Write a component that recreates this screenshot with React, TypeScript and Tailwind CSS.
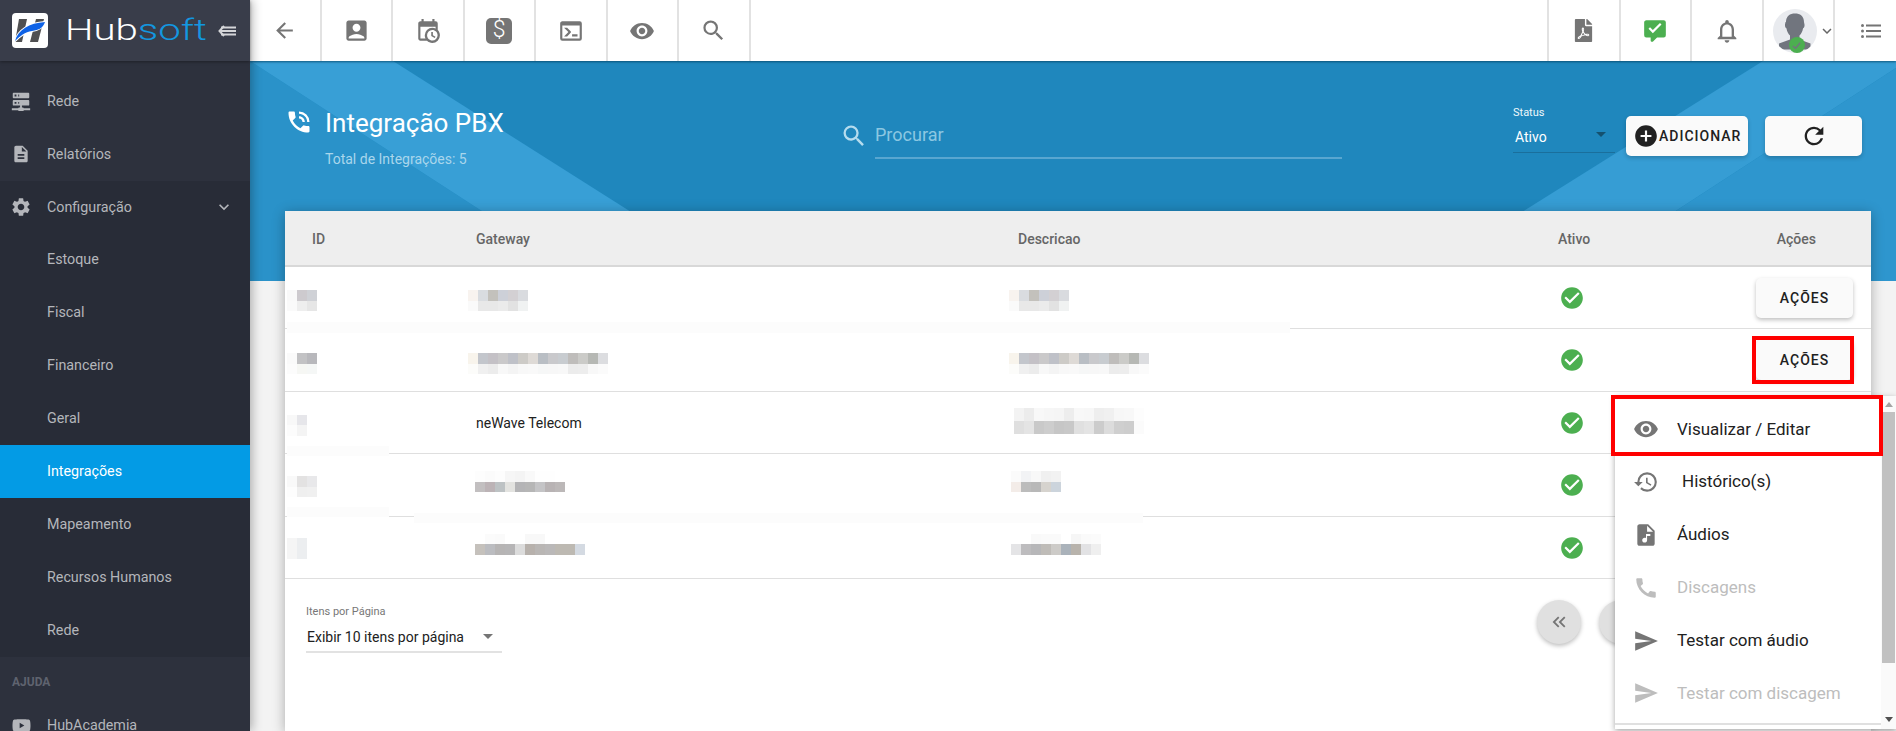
import type { ReactNode } from 'react';
import {
  MdAccountBox,
  MdAddCircle,
  MdArrowBack,
  MdAudioFile,
  MdCall,
  MdCheckCircle,
  MdDescription,
  MdHistory,
  MdKeyboardArrowDown,
  MdKeyboardDoubleArrowLeft,
  MdKeyboardArrowLeft,
  MdNotificationsNone,
  MdPhoneInTalk,
  MdRefresh,
  MdSearch,
  MdSend,
  MdSettings,
  MdVisibility,
} from 'react-icons/md';
import { FaFilePdf, FaYoutube } from 'react-icons/fa';

function MdiIcon({ d, size, className }: { d: string; size: number; className?: string }) {
  return (
    <svg viewBox="0 0 24 24" width={size} height={size} fill="currentColor" className={className}>
      <path d={d} />
    </svg>
  );
}

const SERVER_NETWORK =
  'M13,19H14A1,1 0 0,1 15,20H22V22H15A1,1 0 0,1 14,23H10A1,1 0 0,1 9,22H2V20H9A1,1 0 0,1 10,19H11V17H4A1,1 0 0,1 3,16V12A1,1 0 0,1 4,11H20A1,1 0 0,1 21,12V16A1,1 0 0,1 20,17H13V19M4,3H20A1,1 0 0,1 21,4V8A1,1 0 0,1 20,9H4A1,1 0 0,1 3,8V4A1,1 0 0,1 4,3M9,7H10V5H9V7M9,15H10V13H9V15M5,5V7H7V5H5M5,13V15H7V13H5Z';
const CALENDAR_CLOCK =
  'M15,13H16.5V15.82L18.94,17.23L18.19,18.53L15,16.69V13M19,8H5V19H9.67C9.24,18.09 9,17.07 9,16A7,7 0 0,1 16,9C17.07,9 18.09,9.24 19,9.67V8M5,21C3.89,21 3,20.1 3,19V5C3,3.89 3.89,3 5,3H6V1H8V3H16V1H18V3H19A2,2 0 0,1 21,5V11.1C22.24,12.36 23,14.09 23,16A7,7 0 0,1 16,23C14.09,23 12.36,22.24 11.1,21H5M16,11.15A4.85,4.85 0 0,0 11.15,16C11.15,18.68 13.32,20.85 16,20.85A4.85,4.85 0 0,0 20.85,16C20.85,13.32 18.68,11.15 16,11.15Z';
const CONSOLE =
  'M20,19V7H4V19H20M20,3A2,2 0 0,1 22,5V19A2,2 0 0,1 20,21H4A2,2 0 0,1 2,19V5C2,3.89 2.9,3 4,3H20M13,17V15H18V17H13M9.58,13L5.57,9H8.4L11.7,12.3C12.09,12.69 12.09,13.33 11.7,13.72L8.42,17H5.59L9.58,13Z';
const COMMENT_CHECK =
  'M9 22A1 1 0 0 1 8 21V18H4A2 2 0 0 1 2 16V4C2 2.89 2.9 2 4 2H20A2 2 0 0 1 22 4V16A2 2 0 0 1 20 18H13.9L10.2 21.71C10 21.9 9.75 22 9.5 22H9M10 14L18 6L16.59 4.58L10 11.17L7.41 8.59L6 10L10 14Z';

function NavItem({
  label,
  icon,
  active,
  trailing,
}: {
  label: string;
  icon?: ReactNode;
  active?: boolean;
  trailing?: ReactNode;
}) {
  return (
    <div
      className={`relative flex h-[52.9px] items-center pl-[47px] text-[14.3px] ${
        active ? 'bg-[#039be5] text-white' : 'text-[#b4b6bb]'
      }`}
    >
      {icon && <span className="absolute left-[10px] flex w-[22px] justify-center">{icon}</span>}
      {label}
      {trailing}
    </div>
  );
}

function Sidebar() {
  return (
    <aside className="z-20 flex h-full w-[250px] shrink-0 flex-col bg-[#2d313d] shadow-[2px_0_10px_rgba(0,0,0,0.3)]">
      <div className="flex h-[61px] shrink-0 items-center bg-[#393d4a] pl-[12px] shadow-[0_1px_3px_rgba(0,0,0,0.35)]">
        <svg viewBox="0 0 36 35" width={36} height={35} className="shrink-0">
          <rect width="36" height="35" rx="4" fill="#fff" />
          <path d="M7 6h8l-5 23H3z" fill="#505052" />
          <path d="M24 6h8l-6 23h-8z" fill="#505052" />
          <path d="M3 28C6 17 17 10 33 9 31 15 27 17 20 18 13 19 8 23 3 28z" fill="#fff" stroke="#fff" strokeWidth="2" />
          <path d="M3 28C6 17 17 10 33 9 31 15 27 17 20 18 13 19 8 23 3 28z" fill="#0f62e6" />
        </svg>
        <span className="ml-[17px] inline-block w-[143px] shrink-0">
          <span className="inline-block origin-left scale-x-[1.34] text-[30px] leading-none font-light text-white">
            Hub<span className="text-[#1397e0]">soft</span>
          </span>
        </span>
        <svg viewBox="0 0 18 12" width={18} height={12} className="ml-[10px] shrink-0" fill="none" stroke="#d5d6d9" strokeWidth="2">
          <path d="M6 1 1.5 6 6 11" />
          <path d="M3 2.5h15M3 6h15M3 9.5h15" />
        </svg>
      </div>
      <nav className="flex flex-col pt-[14px]">
        <NavItem label="Rede" icon={<MdiIcon d={SERVER_NETWORK} size={22} />} />
        <NavItem label="Relatórios" icon={<MdDescription size={20} />} />
        <div className="bg-[#282c37]">
          <NavItem
            label="Configuração"
            icon={<MdSettings size={22} />}
            trailing={<MdKeyboardArrowDown size={20} className="absolute left-[214px]" />}
          />
          <NavItem label="Estoque" />
          <NavItem label="Fiscal" />
          <NavItem label="Financeiro" />
          <NavItem label="Geral" />
          <NavItem label="Integrações" active />
          <NavItem label="Mapeamento" />
          <NavItem label="Recursos Humanos" />
          <NavItem label="Rede" />
        </div>
        <div className="pt-[17px] pb-[9px] pl-[12px] text-[12px] leading-[16px] font-bold text-[#5f636f]">AJUDA</div>
        <NavItem label="HubAcademia" icon={<FaYoutube size={19} />} />
      </nav>
    </aside>
  );
}

function ToolCell({ children, className = '' }: { children: ReactNode; className?: string }) {
  return (
    <div className={`flex h-full w-[71.5px] items-center justify-center border-r-2 border-[#e2e2e2] text-[#757575] ${className}`}>
      {children}
    </div>
  );
}

function Toolbar() {
  return (
    <header className="relative z-10 flex h-[61px] shrink-0 items-center bg-white shadow-[0_1px_2px_rgba(0,60,90,0.7)]">
      <ToolCell>
        <MdArrowBack size={25} />
      </ToolCell>
      <ToolCell>
        <MdAccountBox size={27} />
      </ToolCell>
      <ToolCell>
        <MdiIcon d={CALENDAR_CLOCK} size={26} />
      </ToolCell>
      <ToolCell>
        <span className="flex h-[26px] w-[26px] items-center justify-center rounded-[5px] bg-[#757575] text-[23px] font-light text-white">
          $
        </span>
      </ToolCell>
      <ToolCell>
        <MdiIcon d={CONSOLE} size={26} />
      </ToolCell>
      <ToolCell>
        <MdVisibility size={26} />
      </ToolCell>
      <ToolCell>
        <MdSearch size={27} />
      </ToolCell>
      <div className="ml-auto flex h-full">
        <div className="border-l-2 border-[#e2e2e2]" />
        <ToolCell>
          <FaFilePdf size={23} />
        </ToolCell>
        <ToolCell>
          <MdiIcon d={COMMENT_CHECK} size={26} className="text-[#4caf50]" />
        </ToolCell>
        <ToolCell>
          <MdNotificationsNone size={28} />
        </ToolCell>
        <ToolCell className="relative justify-start pl-[9px]">
          <svg viewBox="0 0 44 44" width={44} height={44} className="shrink-0">
            <defs>
              <clipPath id="avatar-clip">
                <circle cx="22" cy="22" r="22" />
              </clipPath>
            </defs>
            <g clipPath="url(#avatar-clip)">
              <rect width="44" height="44" fill="#e9ebef" />
              <path d="M13 13c0-6 4-8.500 9-8.500s9 2.500 9 8.500c0 1 .8 2 .5 4-.3 1.600-1 2-1.500 2.500-.5 3-1.800 5.500-3.500 7v4l11 4v6H6v-6l11-4v-4c-1.700-1.500-3-4-3.500-7-.5-.5-1.200-.9-1.500-2.500-.3-2 .5-3 .5-4z" fill="#71757e" />
            </g>
          </svg>
          <span className="absolute top-[37px] left-[25px] flex h-[16px] w-[16px] items-center justify-center rounded-full bg-[#4caf50]">
            <svg viewBox="0 0 12 12" width={11} height={11} fill="none" stroke="#71757e" strokeWidth="1.500">
              <path d="M2 6.500 5 9l5-6" />
            </svg>
          </span>
          <MdKeyboardArrowDown size={18} className="ml-[1px] shrink-0 text-[#666]" />
        </ToolCell>
        <div className="flex w-[61px] items-center justify-center pl-[10px] text-[#757575]">
          <svg viewBox="0 0 20 14" width={20} height={14} fill="currentColor">
            <circle cx="1.500" cy="1.500" r="1.500" />
            <circle cx="1.500" cy="7" r="1.500" />
            <circle cx="1.500" cy="12.500" r="1.500" />
            <rect x="5" y="0.500" width="15" height="2" />
            <rect x="5" y="6" width="15" height="2" />
            <rect x="5" y="11.500" width="15" height="2" />
          </svg>
        </div>
      </div>
    </header>
  );
}

function Hero() {
  return (
    <section className="relative h-[220px] shrink-0 bg-[#1f87bd]">
      <svg viewBox="0 0 1646 220" width={1646} height={220} className="absolute inset-0">
        <polygon points="0,0 340,220 0,220" fill="#2a92c9" />
        <polygon points="0,0 143,0 490,220 340,220" fill="#389fd6" />
        <polygon points="1513,0 1646,0 1646,7 1318,220 1162,220" fill="#369dd4" />
        <polygon points="1646,7 1646,220 1318,220" fill="#2e96ce" />
      </svg>
      <div className="relative flex text-white">
        <div className="flex w-[592px] shrink-0 pl-[35px]">
          <MdPhoneInTalk size={28} className="mt-[47px] shrink-0" />
          <div className="ml-[12px] pt-[45px]">
            <h1 className="text-[26px] leading-[34px] font-normal">Integração PBX</h1>
            <p className="mt-[10px] text-[14px] leading-[18px] text-[#a9d6ec]">Total de Integrações: 5</p>
          </div>
        </div>
        <MdSearch size={28} className="mt-[61px] -ml-[2px] shrink-0 text-[#b5dcee]" />
        <div className="mt-[62px] ml-[7px] h-[36px] w-[467px] shrink-0 border-b-2 border-[#58a6d0] text-[18px] leading-[24px] text-[#8cc7e2]">
          Procurar
        </div>
        <div className="mt-[45px] ml-[171px] w-[102px] shrink-0">
          <div className="text-[11px] leading-[13px] text-[#eef7fb]">Status</div>
          <div className="mt-[5px] flex h-[29px] items-start justify-between border-b border-[#1a6f9c] pt-[3px] pl-[2px] text-[14px] leading-[20px]">
            Ativo
            <span className="mt-[5px] mr-[9px] h-0 w-0 border-x-[5px] border-t-[5px] border-x-transparent border-t-[#14516f]" />
          </div>
        </div>
        <button className="mt-[55px] ml-[11px] flex h-[40px] w-[122px] shrink-0 items-center rounded-[5px] bg-[#fafafa] pl-[7px] text-[14px] font-medium tracking-[1px] text-[#212121] shadow-[0_2px_4px_rgba(0,0,0,0.2)]">
          <MdAddCircle size={26} className="shrink-0" />
          ADICIONAR
        </button>
        <button className="mt-[55px] ml-[17px] flex h-[40px] w-[97px] shrink-0 items-center justify-center rounded-[5px] bg-[#fafafa] text-[#212121] shadow-[0_2px_4px_rgba(0,0,0,0.2)]">
          <MdRefresh size={28} />
        </button>
      </div>
    </section>
  );
}

function Mosaic({ rows, className = '' }: { rows: string[][]; className?: string }) {
  return (
    <div className={`flex flex-col ${className}`}>
      {rows.map((row, r) => (
        <div key={r} className="flex h-[10.5px]">
          {row.map((c, i) => (
            <span key={i} className="h-full w-[10px]" style={{ backgroundColor: c }} />
          ))}
        </div>
      ))}
    </div>
  );
}

const BLUR = {
  id1: [['#f9f9f9', '#cdcace', '#cfd1d6'], ['#fafafa', '#eeeeee', '#e6e6e6']],
  id2: [['#fafafa', '#c2c2c4', '#b8b8bc'], ['#fcfcfc', '#f6f7f4', '#f5f7f6']],
  id3: [['#f8f8f8', '#e6e6ea'], ['#fcfcfc', '#f4f4f4']],
  id4: [['#f9f9f9', '#e3e2e2', '#e8e8ea'], ['#fdfdfd', '#efefef', '#f0f0f0']],
  id5: [['#f5f5f5', '#eceef0'], ['#f5f5f5', '#eceef0']],
  short: [
    ['#f8f3ef', '#d9dce0', '#c3c1bc', '#cdd0d8', '#d3d0d3', '#d9dbdf'],
    ['#fafafa', '#e8e8e8', '#e8e8e8', '#ebebeb', '#e2e2e2', '#f0f2f2'],
  ],
  long: [
    ['#f8f4ec', '#c3c6cc', '#c4c1c6', '#cac9ca', '#bfc1c8', '#cdcbc7', '#dedad6', '#b9bec4', '#c9c9cc', '#c8ccd0', '#bfbdbb', '#cbcbc8', '#b6b8b4', '#dcdde0'],
    ['#fcfcfa', '#f0f0f0', '#ececec', '#f8f8f8', '#f4f4f4', '#f8f8f8', '#f9f9f9', '#f6f7f7', '#f7f7f7', '#f8f8f8', '#ececec', '#ededed', '#f8f8f8', '#fbfbfb'],
  ],
  desc3: [
    ['#f3f3f3', '#ececec', '#f8f8f8', '#f6f6f6', '#f5f5f5', '#ededed', '#f8f8f8', '#f7f7f7', '#eeeeee', '#f0f0f0', '#f7f7f7', '#f8f8f8', '#fdfdfd'],
    ['#dfdfdf', '#e4e4e4', '#c9c9c9', '#cdcdcd', '#c6c6c6', '#c8c8c8', '#e0e0e0', '#e4e4e4', '#cccccc', '#dcdcdc', '#cfcfcf', '#cdcdcd', '#fbfbfb'],
  ],
  gate4: [
    ['#fdfdfd', '#fbfbfb', '#fdfdfd', '#f6f6f6', '#f4f4f4', '#f9f9f9', '#fefefe', '#fefefe', '#ffffff'],
    ['#c2bfc0', '#bcb3b6', '#bdc2c4', '#e3e3e0', '#b4b4b6', '#b6b6b6', '#c4c4c6', '#b8b3b4', '#bcb8b8'],
  ],
  desc4: [
    ['#fbfbfb', '#f2f3f5', '#f8f8f8', '#f0f0f0', '#f2f2f2'],
    ['#f3ece8', '#bcbcbc', '#b8b8b8', '#d6d3ce', '#ccd4dc'],
  ],
  gate5: [
    ['#ffffff', '#fbfbfb', '#fafafa', '#ffffff', '#ffffff', '#f8f8f8', '#f8f8f8', '#ffffff', '#ffffff', '#ffffff', '#ffffff'],
    ['#c5c1bc', '#bbbcc0', '#b6b4b4', '#b6b5b6', '#dcdcdc', '#b7b1ac', '#b9b6b4', '#bab8b8', '#bdb9b2', '#bdb9b2', '#d4dae2'],
  ],
  desc5: [
    ['#ffffff', '#ffffff', '#f9f9f9', '#fafafa', '#fafafa', '#ffffff', '#f6f6f6', '#fafafa', '#fbfbfb'],
    ['#e4e4e6', '#bdbcbe', '#b7b7b9', '#bfbcb8', '#cdcbc8', '#aab2ba', '#b8b3ac', '#e2e2e4', '#efefef'],
  ],
};

function Row({ children, strips }: { children: ReactNode; strips?: ReactNode }) {
  return (
    <div className="relative grid h-[62.4px] grid-cols-[191px_542px_540px_1fr] border-b border-[#dfdfdf]">
      {children}
      {strips}
    </div>
  );
}

function ActiveCell({ framed }: { framed?: boolean }) {
  return (
    <div className="flex items-start justify-between pr-[18px]">
      <MdCheckCircle size={26} className="mt-[18px] ml-[1px] text-[#4caf50]" />
      <div className="relative mt-[11px]">
        {framed && <div className="absolute -top-[4px] -right-[1px] -bottom-[4px] -left-[4px] border-[4px] border-[#f00]" />}
        <button className="h-[40px] w-[97px] rounded-[5px] bg-[#fafafa] text-[14px] font-medium tracking-[1px] text-[#212121] shadow-[0_2px_4px_rgba(0,0,0,0.25)]">
          AÇÕES
        </button>
      </div>
    </div>
  );
}

function Table() {
  return (
    <div className="relative -mt-[70px] mr-[25px] ml-[35px] flex-1 bg-white shadow-[0_2px_12px_rgba(0,0,0,0.3)]">
      <div className="grid h-[56px] grid-cols-[191px_542px_540px_1fr] items-center border-b-2 border-[#d8d8d8] bg-[#eeeeee] pt-[2px] text-[14px] font-medium text-[#666666]">
        <div className="pl-[27px]">ID</div>
        <div>Gateway</div>
        <div>Descricao</div>
        <div className="flex justify-between pr-[55px]">
          <span>Ativo</span>
          <span>Ações</span>
        </div>
      </div>
      <Row strips={<div className="absolute top-[55px] left-[2px] h-[11px] w-[1003px] bg-[#fcfcfc]" />}>
        <Mosaic rows={BLUR.id1} className="mt-[23px] ml-[2px]" />
        <Mosaic rows={BLUR.short} className="mt-[23px] -ml-[8px]" />
        <Mosaic rows={BLUR.short} className="mt-[23px] -ml-[9px]" />
        <ActiveCell />
      </Row>
      <Row>
        <Mosaic rows={BLUR.id2} className="mt-[24px] ml-[2px]" />
        <Mosaic rows={BLUR.long} className="mt-[24px] -ml-[8px]" />
        <Mosaic rows={BLUR.long} className="mt-[24px] -ml-[9px]" />
        <ActiveCell framed />
      </Row>
      <Row strips={<div className="absolute top-[54px] left-[2px] h-[10px] w-[102px] bg-[#fcfcfc]" />}>
        <Mosaic rows={BLUR.id3} className="mt-[23px] ml-[2px]" />
        <div className="pt-[21px] text-[14px] leading-[20px] text-[#212121]">neWave Telecom</div>
        <Mosaic rows={BLUR.desc3} className="mt-[16px] -ml-[4px] [&>div]:h-[13px]" />
        <ActiveCell />
      </Row>
      <Row
        strips={
          <>
            <div className="absolute top-[53px] left-[2px] h-[10px] w-[102px] bg-[#fcfcfc]" />
            <div className="absolute top-[59px] left-[129px] h-[10px] w-[729px] bg-[#fcfcfc]" />
          </>
        }
      >
        <Mosaic rows={BLUR.id4} className="mt-[22px] ml-[2px]" />
        <Mosaic rows={BLUR.gate4} className="mt-[17px] -ml-[1px]" />
        <Mosaic rows={BLUR.desc4} className="mt-[17px] -ml-[7px]" />
        <ActiveCell />
      </Row>
      <Row>
        <Mosaic rows={BLUR.id5} className="mt-[21px] ml-[2px]" />
        <Mosaic rows={BLUR.gate5} className="mt-[17px] -ml-[1px]" />
        <Mosaic rows={BLUR.desc5} className="mt-[17px] -ml-[7px]" />
        <ActiveCell />
      </Row>
      <div className="flex items-start pt-[26px] pl-[21px]">
        <div className="w-[196px]">
          <div className="text-[11px] leading-[14px] text-[#777777]">Itens por Página</div>
          <div className="mt-[4px] flex h-[30px] items-start justify-between border-b-2 border-[#e2e2e2] pt-[4px] pl-[1px] text-[14px] leading-[20px] text-[#212121]">
            Exibir 10 itens por página
            <span className="mt-[7px] mr-[9px] h-0 w-0 border-x-[5px] border-t-[5px] border-x-transparent border-t-[#757575]" />
          </div>
        </div>
        <div className="mt-[-5px] mr-[228px] ml-auto flex gap-[18px]">
          <span className="flex h-[44px] w-[44px] items-center justify-center rounded-full bg-[#e0e0e0] text-[#757575] shadow-[0_2px_4px_rgba(0,0,0,0.25)]">
            <MdKeyboardDoubleArrowLeft size={22} />
          </span>
          <span className="flex h-[44px] w-[44px] items-center justify-center rounded-full bg-[#e0e0e0] text-[#757575] shadow-[0_2px_4px_rgba(0,0,0,0.25)]">
            <MdKeyboardArrowLeft size={22} />
          </span>
        </div>
      </div>
    </div>
  );
}

function MenuItem({
  icon,
  label,
  disabled,
  className = '',
}: {
  icon: ReactNode;
  label: string;
  disabled?: boolean;
  className?: string;
}) {
  return (
    <div
      className={`flex h-[52.8px] items-center pl-[18px] text-[17px] ${
        disabled ? 'text-[#bdbdbd]' : 'text-[#212121]'
      }`}
    >
      <span className={`flex w-[26px] justify-center ${disabled ? 'text-[#bdbdbd]' : 'text-[#757575]'}`}>{icon}</span>
      <span className={className}>{label}</span>
    </div>
  );
}

function ActionsMenu() {
  return (
    <div className="absolute top-[396px] left-[1365px] z-10 flex h-[333px] w-[281px] bg-white shadow-[0_2px_6px_rgba(0,0,0,0.35)]">
      <div className="relative w-[266px] shrink-0 pt-[7px]">
        <MenuItem icon={<MdVisibility size={26} />} label="Visualizar / Editar" className="ml-[18px]" />
        <MenuItem icon={<MdHistory size={26} />} label="Histórico(s)" className="ml-[23px]" />
        <MenuItem icon={<MdAudioFile size={26} />} label="Áudios" className="ml-[18px]" />
        <MenuItem icon={<MdCall size={26} />} label="Discagens" disabled className="ml-[18px]" />
        <MenuItem icon={<MdSend size={26} />} label="Testar com áudio" className="ml-[18px]" />
        <MenuItem icon={<MdSend size={26} />} label="Testar com discagem" disabled className="ml-[18px]" />
        <div className="mt-[3px] border-b-2 border-[#e0e0e0]" />
        <div className="absolute -top-[1px] -left-[4px] h-[61px] w-[272px] border-[4px] border-[#f00]" />
      </div>
      <div className="flex w-[15px] flex-col items-center bg-[#fafafa]">
        <span className="mt-[6px] h-0 w-0 border-x-[4px] border-b-[5px] border-x-transparent border-b-[#a3a3a3]" />
        <span className="mt-[5px] h-[251px] w-[13px] bg-[#c1c1c1]" />
        <span className="mt-[54px] h-0 w-0 border-x-[4px] border-t-[5px] border-x-transparent border-t-[#505050]" />
      </div>
    </div>
  );
}

export default function App() {
  return (
    <div className="flex h-[731px] w-[1896px] overflow-hidden font-['Roboto',sans-serif]">
      <Sidebar />
      <main className="relative flex h-full flex-1 flex-col overflow-hidden bg-[#f3f3f3]">
        <Toolbar />
        <Hero />
        <Table />
        <ActionsMenu />
      </main>
    </div>
  );
}
